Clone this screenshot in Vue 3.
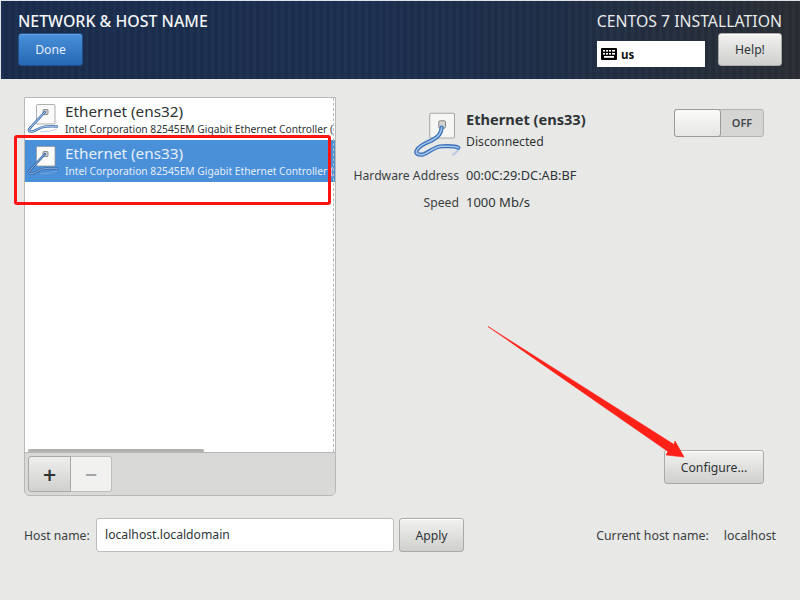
<script setup>
const devices = [
  { id: 'ens32', selected: false },
  { id: 'ens33', selected: true },
]
</script>

<template>
  <div class="app">
    <header class="top">
      <div class="top-left">
        <h1 class="spoke-title">NETWORK &amp; HOST NAME</h1>
        <button class="btn done">Done</button>
      </div>
      <div class="top-right">
        <div class="product">CENTOS 7 INSTALLATION</div>
        <div class="top-controls">
          <div class="layout">
            <svg class="kbd" viewBox="0 0 16 12" width="16" height="12">
              <rect width="16" height="12" rx="1" fill="#000" />
              <g fill="#fff">
                <rect x="2" y="2" width="2" height="1.6" /><rect x="5" y="2" width="2" height="1.6" /><rect x="8" y="2" width="2" height="1.6" /><rect x="11" y="2" width="3" height="1.6" />
                <rect x="2" y="5" width="2" height="1.6" /><rect x="5" y="5" width="2" height="1.6" /><rect x="8" y="5" width="2" height="1.6" /><rect x="11" y="5" width="3" height="1.6" />
                <rect x="3" y="8" width="10" height="1.8" />
              </g>
            </svg>
            <span>us</span>
          </div>
          <button class="btn help">Help!</button>
        </div>
      </div>
    </header>

    <main class="content">
      <section class="panel">
        <div class="list">
          <div v-for="d in devices" :key="d.id" class="row" :class="{ selected: d.selected }">
            <svg class="cable" viewBox="0 0 32 32" width="32" height="32">
              <rect class="plate" x="10.5" y="2.5" width="18.500" height="19.500" rx="1" />
              <rect class="jack" x="17" y="7.500" width="5" height="5" rx="1" />
              <path class="wire-fade" d="M14 29.500C20 30 26 29 31 27" />
              <path class="wire-out" d="M19 10L5 25C2 28 2 30 6 29.500C10 29 13 25 20 24.500C24 24.200 28 24 31 24.500" />
              <path class="wire-in" d="M19 10L5 25C2 28 2 30 6 29.500C10 29 13 25 20 24.500C24 24.200 28 24 31 24.500" />
            </svg>
            <div class="row-text">
              <div class="row-name">Ethernet ({{ d.id }})</div>
              <div class="row-desc">Intel Corporation 82545EM Gigabit Ethernet Controller (</div>
            </div>
          </div>
          <div class="dash"></div>
          <div class="hscroll"></div>
        </div>
        <div class="toolbar">
          <button class="tool add">+</button>
          <button class="tool remove">−</button>
        </div>
      </section>

      <section class="detail">
        <div class="detail-top">
          <div class="info">
            <div class="info-icon">
              <svg viewBox="0 0 32 32" width="48" height="48">
                <rect x="10.500" y="1.500" width="16.500" height="16.500" rx="1" fill="#f6f6f5" stroke="#a8a8a6" stroke-width=".7" />
                <rect x="16.500" y="6.500" width="4.500" height="5" rx="1" fill="#d4d4d2" stroke="#777" stroke-width=".6" />
                <path d="M26 29C28 28 30 26 29.500 24.500" fill="none" stroke="#b9cde6" stroke-width="1.500" stroke-linecap="round" />
                <path d="M18.400 11C18.400 15 16 17.500 12 19.500C8 21.500 4 22.500 2 26C.5 28.500 3 29.500 6 29C10 28 13 23.500 19 23.500C23 23.500 27 23 29.500 24.500" fill="none" stroke="#3f74b8" stroke-width="2.800" stroke-linecap="round" />
                <path d="M18.400 11C18.400 15 16 17.500 12 19.500C8 21.500 4 22.500 2 26C.5 28.500 3 29.500 6 29C10 28 13 23.500 19 23.500C23 23.500 27 23 29.500 24.500" fill="none" stroke="#a5c6ee" stroke-width="1" stroke-linecap="round" />
              </svg>
            </div>
            <div class="info-head">
              <div class="dev-name">Ethernet (ens33)</div>
              <div class="dev-state">Disconnected</div>
            </div>
            <div class="lbl addr">Hardware Address</div>
            <div class="val addr">00:0C:29:DC:AB:BF</div>
            <div class="lbl speed">Speed</div>
            <div class="val speed wide">1000 Mb/s</div>
          </div>
          <div class="switch">
            <div class="knob"></div>
            <div class="off">OFF</div>
          </div>
        </div>
        <div class="detail-bottom">
          <button class="btn configure">Configure...</button>
        </div>
      </section>
    </main>

    <footer class="foot">
      <label class="host-label">Host name:</label>
      <div class="host-input">localhost.localdomain</div>
      <button class="btn apply">Apply</button>
      <div class="current">
        <span>Current host name:</span>
        <span>localhost</span>
      </div>
    </footer>

    <div class="mark-box"></div>
    <svg class="mark-arrow" viewBox="0 0 800 600" width="800" height="600">
      <polygon points="488,326.500 674,444.500 675,441 684,457 666,455 668,451.500" fill="#ff2018" stroke="#ff2018" stroke-width=".6" />
    </svg>
  </div>
</template>

<style scoped>
.app {
  position: relative;
  width: 800px;
  height: 600px;
  overflow: hidden;
  background: #e8e8e7;
  color: #2e3436;
  font-family: "Noto Sans", sans-serif;
  font-size: 12.200px;
}
.top {
  height: 79px;
  box-sizing: border-box;
  display: flex;
  justify-content: space-between;
  color: #fff;
  border-top: 1px solid #dfe2e6;
  border-left: 1px solid #dfe2e6;
  padding: 11px 18px 0 17px;
  background:
    repeating-linear-gradient(90deg, rgba(255,255,255,.018) 0 3px, rgba(0,0,0,.02) 3px 7px),
    linear-gradient(90deg, #1a2c4c 0%, #1c2f50 45%, #1f2e47 70%, #2a2d33 100%);
}
.spoke-title {
  margin: 0;
  font-size: 15.900px;
  line-height: 18px;
  font-weight: 500;
  color: #f4f5f6;
}
.btn {
  box-sizing: border-box;
  border: 1px solid #aaaaa8;
  border-radius: 3px;
  background: linear-gradient(#f2f2f1, #cfcfcd);
  color: #2e3436;
  font-family: inherit;
  font-size: 12.200px;
  padding: 0;
  box-shadow: inset 0 1px 0 #fff;
}
.done {
  display: block;
  margin-top: 3px;
  width: 65px;
  height: 33px;
  color: #e6eef8;
  border-color: #1f4f8c;
  background: linear-gradient(#4a90d9, #2568b4);
  box-shadow: inset 0 1px 0 #6ba5e2;
}
.top-right {
  display: flex;
  flex-direction: column;
  align-items: flex-end;
}
.product {
  font-size: 15.800px;
  line-height: 18px;
  color: #e8e9ea;
}
.top-controls {
  display: flex;
  align-items: flex-start;
  gap: 13px;
  margin-top: 3px;
}
.layout {
  width: 108px;
  height: 26px;
  margin-top: 8px;
  background: #fff;
  color: #111;
  display: flex;
  align-items: center;
  gap: 4px;
  padding-left: 4px;
  box-sizing: border-box;
  font-size: 11.500px;
  font-weight: 700;
}
.help {
  width: 64px;
  height: 33px;
}

.content {
  display: flex;
  height: 399px;
  margin-top: 18px;
  padding: 0 36px 0 24px;
}
.panel {
  width: 312px;
  box-sizing: border-box;
  display: flex;
  flex-direction: column;
  border: 1px solid #b8b8b6;
  border-radius: 0 0 5px 5px;
  overflow: hidden;
  flex-shrink: 0;
}
.list {
  position: relative;
  flex: 1;
  background: #fff;
  border-bottom: 1px solid #b8b8b6;
  overflow: hidden;
}
.row {
  display: flex;
  height: 42px;
  box-sizing: border-box;
  padding: 4px 0 0 1px;
  gap: 7px;
  overflow: hidden;
}
.row.selected {
  background: #4a90d9;
  color: #e6eef8;
}
.row-text {
  min-width: 0;
  width: 268px;
  overflow: hidden;
  white-space: nowrap;
}
.row-name {
  font-size: 15.300px;
  line-height: 19px;
}
.row-desc {
  font-size: 10.250px;
  line-height: 14px;
  margin-top: 1px;
}
.cable { flex-shrink: 0; overflow: visible; }
.plate { fill: #fafafa; stroke: #9b9b99; stroke-width: .8; }
.jack { fill: #cfcfcd; stroke: #666; stroke-width: .7; }
.wire-out { fill: none; stroke: #3f6fb0; stroke-width: 2.500; stroke-linecap: round; }
.wire-in { fill: none; stroke: #c3d8f2; stroke-width: .9; stroke-linecap: round; }
.wire-fade { fill: none; stroke: #c5d3e6; stroke-width: 1.200; }
.selected .wire-out { stroke: #3a68a8; }
.selected .wire-in { stroke: #8fb4e3; }
.selected .wire-fade { stroke: #6fa0d8; }
.dash {
  position: absolute;
  top: 0;
  bottom: 0;
  right: 1px;
  border-right: 1px dashed #bdbdbb;
}
.hscroll {
  position: absolute;
  left: 3px;
  bottom: 0;
  width: 176px;
  height: 3px;
  border-radius: 2px;
  background: #b0b0ae;
}
.toolbar {
  height: 42px;
  flex-shrink: 0;
  background: #d9d9d7;
  display: flex;
  padding: 3px 0 0 3px;
  box-sizing: border-box;
}
.tool {
  box-sizing: border-box;
  height: 36px;
  border: 1px solid #bdbdbb;
  font-family: "DejaVu Sans", sans-serif;
  padding: 0;
}
.add {
  width: 43px;
  border-radius: 3px 0 0 3px;
  background: linear-gradient(#eeeeed, #d0d0ce);
  color: #2e3436;
  font-size: 18px;
  font-weight: 700;
  border-color: #a8a8a6;
}
.remove {
  width: 41px;
  border-left: 0;
  border-radius: 0 3px 3px 0;
  background: #f1f1f0;
  color: #a0a3a3;
  font-size: 16px;
  font-weight: 700;
}

.detail {
  flex: 1;
  display: flex;
  flex-direction: column;
  justify-content: space-between;
  min-width: 0;
}
.detail-top {
  display: flex;
  justify-content: space-between;
  align-items: flex-start;
  padding-top: 12px;
}
.info {
  display: grid;
  grid-template-columns: 105px auto;
  grid-template-rows: 48px 27px 27px;
  column-gap: 7px;
  margin-left: 18px;
  align-items: center;
}
.info-icon {
  width: 48px;
  height: 48px;
  justify-self: end;
  margin-right: -3px;
  margin-top: 3px;
}
.info-head { align-self: start; }
.dev-name {
  font-size: 14.600px;
  font-weight: 700;
  line-height: 20px;
}
.dev-state {
  line-height: 20px;
  margin-top: 3px;
}
.lbl {
  text-align: right;
  white-space: nowrap;
  justify-self: end;
  color: #3a3f41;
}
.val { white-space: nowrap; font-size: 12.750px; }
.val.wide { font-size: 13px; }
.addr { margin-top: 9px; }
.speed { margin-top: 9px; }
.switch {
  width: 90px;
  height: 28px;
  box-sizing: border-box;
  display: flex;
  border: 1px solid #b4b4b2;
  border-radius: 3px;
  background: #d5d5d3;
  flex-shrink: 0;
}
.knob {
  width: 45px;
  margin: -1px 0 -1px -1px;
  border: 1px solid #9a9a98;
  border-radius: 3px;
  background: linear-gradient(#fbfbfa, #e6e6e5);
}
.off {
  flex: 1;
  text-align: center;
  line-height: 26px;
  font-size: 11px;
  font-weight: 600;
  color: #44494b;
}
.detail-bottom {
  display: flex;
  justify-content: flex-end;
  padding-bottom: 12px;
}
.configure {
  width: 100px;
  height: 34px;
}

.foot {
  display: flex;
  align-items: center;
  height: 34px;
  margin-top: 22px;
  padding: 0 24px;
}
.host-label { color: #3a3f41; width: 67px; white-space: nowrap; }
.host-input {
  box-sizing: border-box;
  width: 298px;
  height: 34px;
  margin-left: 5px;
  padding-left: 8px;
  line-height: 32px;
  background: #fff;
  border: 1px solid #bcbcba;
  border-radius: 3px;
}
.apply {
  width: 65px;
  height: 34px;
  margin-left: 5px;
}
.current {
  margin-left: auto;
  display: flex;
  gap: 15px;
  font-size: 12.350px;
  color: #3a3f41;
}

.mark-box {
  position: absolute;
  left: 14px;
  top: 135px;
  width: 317px;
  height: 70px;
  box-sizing: border-box;
  border: 3px solid #fb1412;
  border-radius: 3px;
}
.mark-arrow {
  position: absolute;
  left: 0;
  top: 0;
  pointer-events: none;
}
</style>
